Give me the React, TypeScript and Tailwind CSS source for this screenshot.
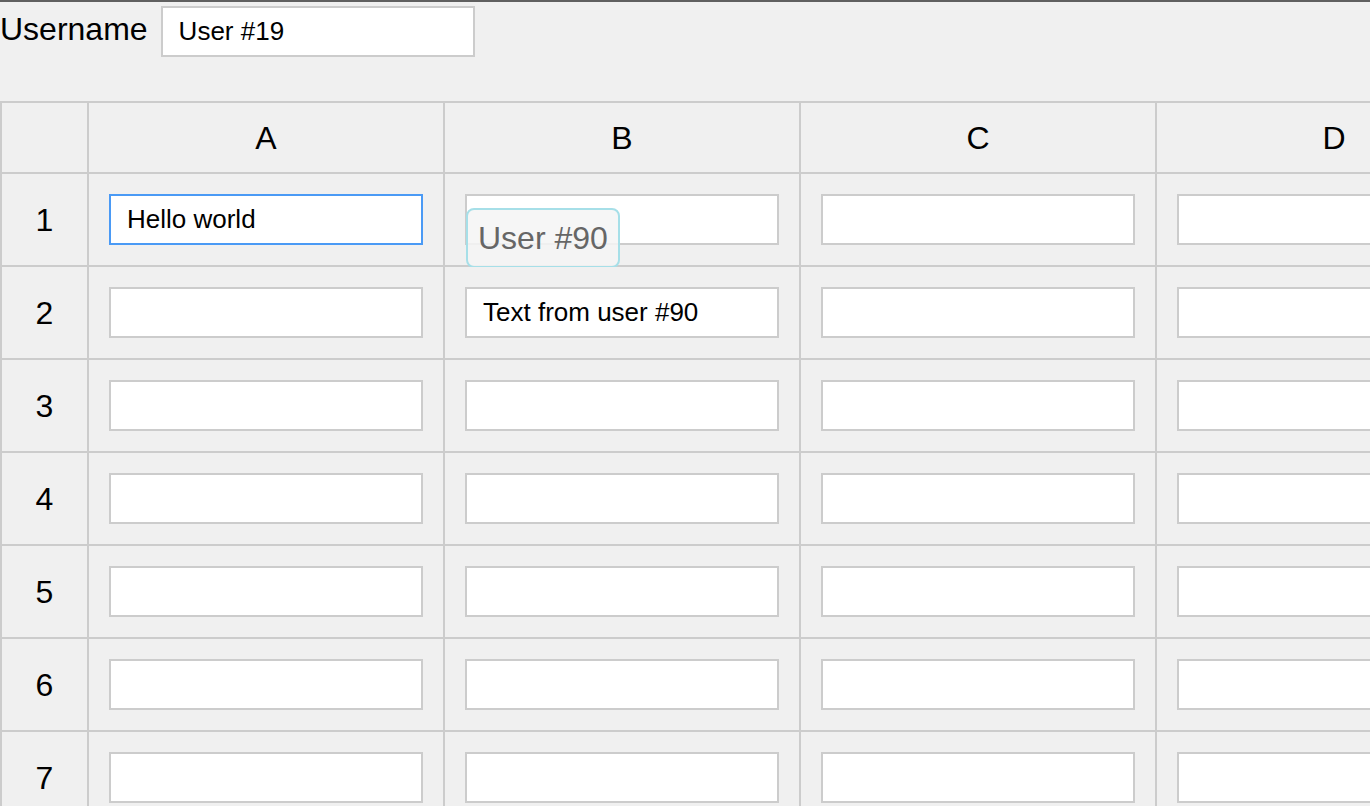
import React from "react";

const cols = ["A", "B", "C", "D"];
const rows = [1, 2, 3, 4, 5, 6, 7, 8];

const inputBase =
  "w-[314px] h-[51px] bg-white px-4 text-[26px] text-black outline-none border-2";

function Cell({ row, col }: { row: number; col: string }) {
  let value = "";
  let focused = false;
  if (row === 1 && col === "A") {
    value = "Hello world";
    focused = true;
  }
  if (row === 2 && col === "B") value = "Text from user #90";

  return (
    <div className="relative bg-[#f0f0f0] p-[20px]">
      <input
        readOnly
        value={value}
        className={`${inputBase} ${focused ? "border-[#4a9af5]" : "border-[#cccccc]"}`}
      />
      {row === 1 && col === "B" && (
        // remote user cursor label
        <div className="absolute left-[21px] top-[34px] flex h-[60px] items-center whitespace-nowrap rounded-lg border-2 border-[#a6dfe8] bg-[#f5f5f5]/85 px-[10px] text-[32px] text-[#666666]">
          User #90
        </div>
      )}
    </div>
  );
}

export default function App() {
  return (
    <div
      className="h-screen w-full overflow-hidden border-t-2 border-[#606060] bg-[#f0f0f0]"
      style={{ fontFamily: '"Liberation Sans", Arial, sans-serif' }}
    >
      {/* Username */}
      <div className="flex items-start gap-[13px] pt-[4px]">
        <span className="mt-[5px] text-[32px] leading-[37px] text-black">Username</span>
        <input
          readOnly
          value="User #19"
          className="h-[51px] w-[314px] border-2 border-[#cccccc] bg-white px-4 text-[26px] text-black outline-none"
        />
      </div>

      {/* Grid */}
      <div className="mt-[44px] grid w-max grid-cols-[85px_354px_354px_354px_354px] gap-[2px] bg-[#cccccc] p-[2px]">
        <div className="h-[69px] bg-[#f0f0f0]" />
        {cols.map((c) => (
          <div
            key={c}
            className="flex h-[69px] items-center justify-center bg-[#f0f0f0] text-[32px] text-black"
          >
            {c}
          </div>
        ))}
        {rows.map((r) => (
          <React.Fragment key={r}>
            <div className="flex h-[91px] items-center justify-center bg-[#f0f0f0] text-[32px] text-black">
              {r}
            </div>
            {cols.map((c) => (
              <Cell key={c} row={r} col={c} />
            ))}
          </React.Fragment>
        ))}
      </div>
    </div>
  );
}
